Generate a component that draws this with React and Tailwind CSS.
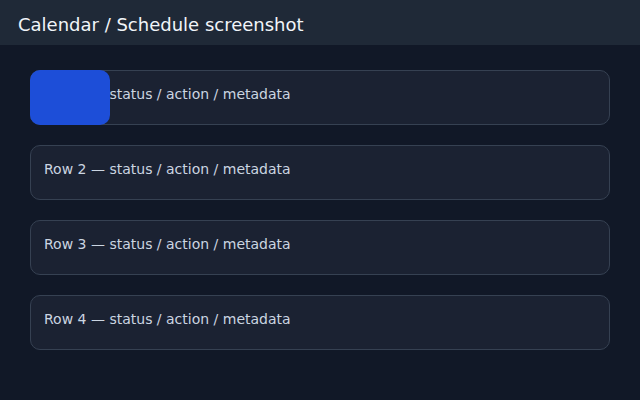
export default function App() {
  const rows = [1, 2, 3, 4];
  return (
    <div className="w-[640px] h-[400px] bg-[#111827] overflow-hidden" style={{ fontFamily: '"DejaVu Sans", sans-serif' }}>
      <div className="h-[45px] bg-[#1f2937] flex items-center pt-[4px] px-[18px] text-[18px] text-[#f1f5f9]">
        Calendar / Schedule screenshot
      </div>
      <div className="flex flex-col gap-[20px] px-[30px] pt-[25px]">
        {rows.map((n) => (
          <div key={n} className="relative h-[55px] rounded-[10px] border border-[#364152] bg-[#1b2232] flex items-start pt-[13px] px-[13px] text-[14px] leading-[20px] text-[#cbd5e1]">
            Row {n} — status / action / metadata
            {n === 1 && (
              <div className="absolute left-[-1px] top-[-1px] w-[80px] h-[55px] rounded-[10px] bg-[#1d4ed8]" />
            )}
          </div>
        ))}
      </div>
    </div>
  );
}
